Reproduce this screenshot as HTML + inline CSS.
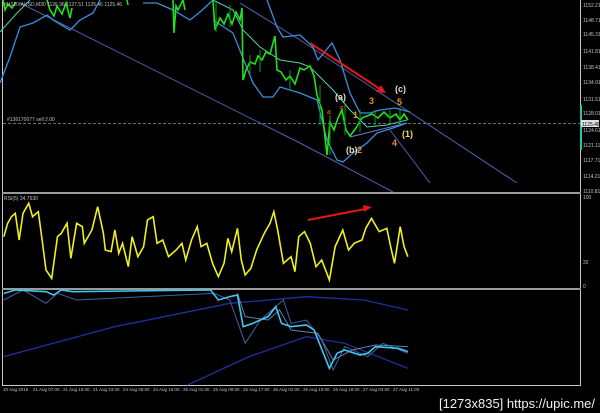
<!DOCTYPE html>
<html><head><meta charset="utf-8"><style>
html,body{margin:0;padding:0;background:#000;width:600px;height:413px;overflow:hidden}
svg{display:block}
text{font-family:"Liberation Sans",sans-serif}
</style></head><body>
<svg width="600" height="413" viewBox="0 0 600 413" xmlns="http://www.w3.org/2000/svg">
<rect width="600" height="413" fill="#000"/>
<!-- frame -->
<g stroke="#c8c8c8" fill="none" stroke-width="1">
<line x1="2.5" y1="0" x2="2.5" y2="385"/>
<line x1="580.5" y1="0" x2="580.5" y2="385"/>
<line x1="2" y1="385.5" x2="581" y2="385.5"/>
</g>
<rect x="2" y="192" width="579" height="2" fill="#9a9a9a"/>
<rect x="2" y="288" width="579" height="2" fill="#9a9a9a"/>
<!-- dashed price line -->
<line x1="3" y1="123.5" x2="580" y2="123.5" stroke="#5a7a6a" stroke-dasharray="3,2"/>
<!-- diagonals -->
<g stroke="#5060b0" fill="none" stroke-width="1">
<polyline points="20,3 300,143 393,192"/>
<polyline points="240,3 300,40 517,183"/>
<polyline points="390,130 430,183"/>
<polyline points="350,137 407,123" stroke="#7080d0"/>
</g>
<!-- bollinger -->
<g stroke="#3a8ee0" fill="none" stroke-width="1.3">
<polyline points="0,83 10,57 20,27 33,23 47,15 53,20 70,30 80,20 93,13 100,0"/>
<polyline points="143,3 157,3 173,10 190,20 200,12 213,0"/>
<polyline points="267,0 277,27 283,37 300,35 313,47 318,60 332,43 340,60 350,93 360,113 370,113 380,110 395,108 410,112"/>
<polyline points="213,20 233,33 253,83 263,97 273,97 280,87 300,93 317,100 327,140 337,160 343,162 353,153 367,143 377,133 393,128 407,123"/>
</g>
<g stroke="#50d0b0" fill="none" stroke-width="1">
<polyline points="0,32 17,13 23,7 30,0"/>
<polyline points="213,0 233,10 243,30 260,47 280,60 300,63 310,67 320,77 333,90 350,110 367,127 387,125 407,120"/>
</g>
<!-- price candles -->
<g stroke="#20e020" fill="none" stroke-width="1.6">
<polyline points="3,0 5,10 8,4 12,8 16,2"/>
<polyline points="47,0 50,10 54,16 57,6 62,14 66,3 70,18 72,8"/>
<polyline points="127,0 128,5"/>
<polyline points="173,0 174,33 176,6 178,10 183,0 185,10"/>
<polyline points="213,0 215,30 220,18 224,24 228,14 232,24 236,12 240,20 242,8 243,80 246,70 250,62 255,64 258,56 262,60 266,52 270,54 275,36 277,70 281,72 286,80 290,76 295,84 300,68 304,70 310,66 314,76 317,95 322,110 327,155 330,122 334,130 338,118 342,110 346,130 350,136 356,128 362,118 367,116 372,114 378,118 384,112 390,118 396,114 400,120 404,114 408,120"/>
</g>
<g stroke="#10a010" fill="none" stroke-width="1">
<path d="M216,2v30M230,5v22M250,55v20M260,50v22M290,70v20M320,85v40M330,115v40M345,105v30M360,110v22M375,110v16M390,110v15M400,108v16"/>
</g>
<!-- red arrows -->
<g stroke="#e01818" stroke-width="2" fill="#e01818">
<line x1="310" y1="43" x2="380" y2="89"/>
<polygon points="386,93 376,92 381,85" stroke="none"/>
<line x1="308" y1="220" x2="365" y2="209"/>
<polygon points="372,207 364,212 363,205" stroke="none"/>
</g>
<!-- wave labels -->
<g font-size="9" font-weight="bold">
<text x="335" y="100" fill="#e8d8c0">(a)</text>
<text x="395" y="92" fill="#e8d8c0">(c)</text>
<text x="346" y="153" fill="#e8d8c0">(b)</text>
<text x="402" y="137" fill="#e8e040">(1)</text>
<text x="327" y="114" fill="#e04020" font-size="7">a</text>
<text x="340" y="110" fill="#e04020" font-size="7">c</text>
<text x="353" y="118" fill="#e89020">1</text>
<text x="369" y="104" fill="#e89020">3</text>
<text x="397" y="105" fill="#e89020">5</text>
<text x="357" y="153" fill="#e89020">2</text>
<text x="392" y="146" fill="#e89020">4</text>
</g>
<!-- top-left labels -->
<text x="4" y="6" font-size="5" fill="#c0c0c0">#USDXAUSD,M30 1126.96 1127.51 1125.46 1125.46</text>
<text x="7" y="121" font-size="5" fill="#c0c0c0">#136170077 sell 2.00</text>
<text x="4" y="200" font-size="5" fill="#c0c0c0">RSI(5) 34.7630</text>
<!-- right axis -->
<g font-size="5" fill="#c0c0c0">
<text x="583" y="7">1152.21</text><text x="583" y="22">1148.71</text><text x="583" y="36">1145.31</text>
<text x="583" y="53">1141.81</text><text x="583" y="69">1138.41</text><text x="583" y="84">1134.91</text>
<text x="583" y="101">1131.51</text><text x="583" y="115">1128.01</text><text x="583" y="132">1124.61</text>
<text x="583" y="147">1121.11</text><text x="583" y="162">1117.71</text><text x="583" y="178">1114.21</text>
<text x="583" y="193">1110.81</text>
<text x="583" y="199">100</text><text x="583" y="264">32</text><text x="583" y="288">0</text>
</g>
<rect x="580" y="105" width="2" height="45" fill="#30c0b0"/>
<rect x="581" y="120" width="18" height="7" fill="#e0e0e0"/>
<text x="582" y="126" font-size="5" fill="#000">1125.46</text>
<!-- RSI -->
<g transform="translate(0,180) scale(0.383,0.3333)">
<polyline vector-effect="non-scaling-stroke" stroke="#f0f020" stroke-width="1.6" fill="none" points="10,170 20,130 30,110 40,100 50,180 60,100 75,70 85,110 100,95 110,180 120,270 135,295 150,170 160,160 175,130 185,235 200,130 215,140 220,190 240,150 255,80 270,160 275,210 290,215 300,150 310,220 320,190 335,260 345,170 360,230 375,200 385,120 400,110 410,190 425,180 440,230 460,210 475,190 485,240 500,180 515,140 525,200 540,190 555,250 570,290 585,250 595,175 605,215 620,145 630,240 640,285 655,265 670,210 690,160 705,130 715,95 725,150 740,250 760,230 770,275 780,170 795,155 810,190 825,260 840,240 860,300 875,200 895,150 910,210 925,190 945,180 955,145 970,115 990,155 1010,145 1020,200 1030,250 1045,140 1055,200 1065,230"/>
</g>
<!-- bottom panel -->
<g transform="translate(0,280) scale(0.383,0.3333)" fill="none">
<polyline vector-effect="non-scaling-stroke" stroke="#2030a0" stroke-width="1.3" points="10,230 300,140 600,70 800,50 950,60 1065,90"/>
<polyline vector-effect="non-scaling-stroke" stroke="#2030a0" stroke-width="1.3" points="490,315 650,230 800,170 900,190 1065,265"/>
<polyline vector-effect="non-scaling-stroke" stroke="#4060a0" stroke-width="1" points="10,60 60,30 120,70 150,40 200,60 560,40 600,60 640,190 680,120 740,60 760,130 800,120 840,180 870,270 900,200 960,230 1000,190 1065,220"/>
<polyline vector-effect="non-scaling-stroke" stroke="#6080b0" stroke-width="1" points="620,40 640,110 700,120 730,90 760,150 830,160 870,240 920,210 980,195 1065,200"/>
<polyline vector-effect="non-scaling-stroke" stroke="#40c8f0" stroke-width="1.6" points="10,40 40,30 120,35 140,45 160,30 190,35 550,30 570,60 600,50 620,45 635,140 660,130 700,110 720,80 735,130 760,140 800,135 820,150 860,265 880,220 900,210 940,225 960,220 980,200 1040,205 1065,215"/>
</g>
<!-- dates -->
<g font-size="4.5" fill="#c0c0c0">
<text x="3" y="391">20 Aug 2015</text><text x="33" y="391">21 Aug 07:00</text><text x="63" y="391">21 Aug 15:00</text>
<text x="93" y="391">21 Aug 23:00</text><text x="123" y="391">24 Aug 08:00</text><text x="153" y="391">24 Aug 16:00</text>
<text x="183" y="391">25 Aug 01:00</text><text x="213" y="391">25 Aug 09:00</text><text x="243" y="391">25 Aug 17:00</text>
<text x="273" y="391">26 Aug 02:00</text><text x="303" y="391">26 Aug 10:00</text><text x="333" y="391">26 Aug 18:00</text>
<text x="363" y="391">27 Aug 03:00</text><text x="393" y="391">27 Aug 11:00</text>
</g>
<text x="439" y="408" font-size="13" fill="#f0f0f0" textLength="156" lengthAdjust="spacingAndGlyphs">[1273x835] https://upic.me/</text>
</svg>
</body></html>
